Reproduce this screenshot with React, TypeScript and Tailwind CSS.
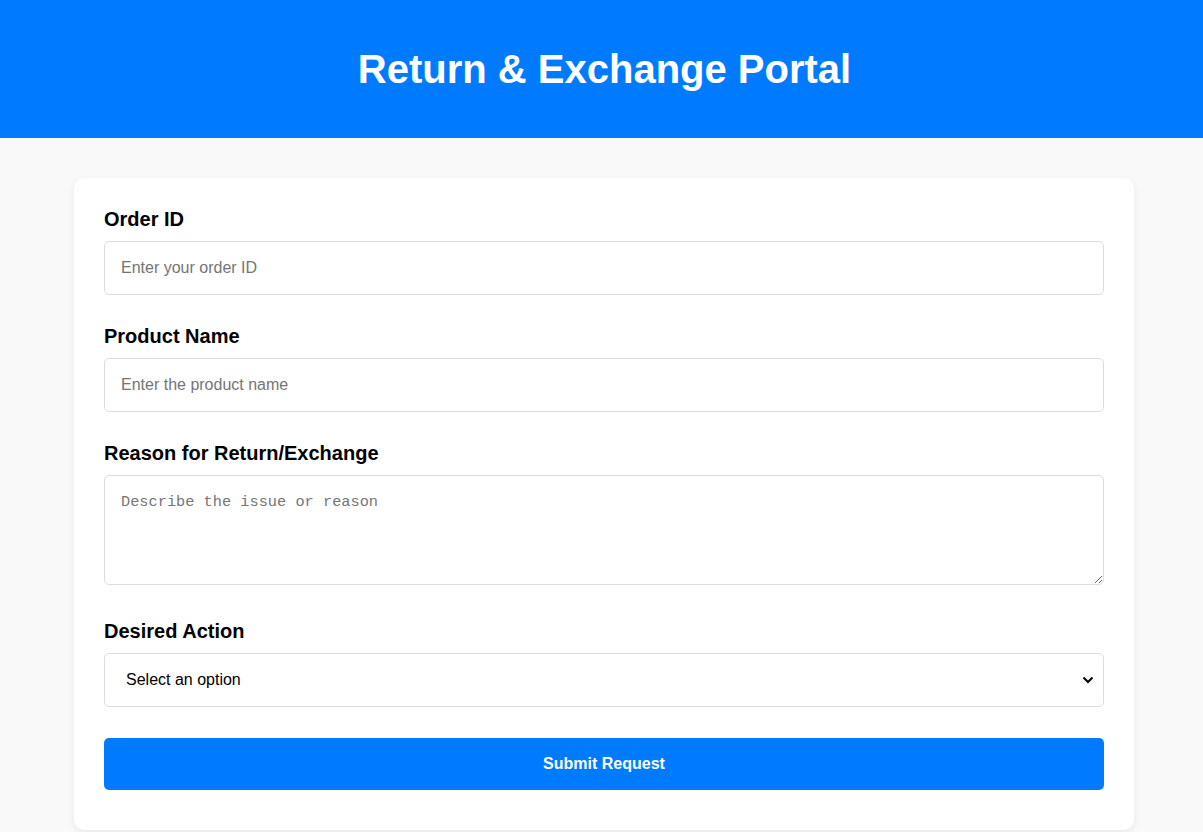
import React from "react";

export default function App() {
  const font = { fontFamily: '"Liberation Sans", Arial, sans-serif' };
  return (
    <div className="min-h-[832px] bg-[#f9f9f9] font-['Liberation_Sans',Arial,sans-serif]" style={font}>
      <header className="h-[138px] bg-[#007bff] flex items-center justify-center pl-[6px]">
        <h1 className="text-white text-[40px] font-bold leading-[46px]">Return &amp; Exchange Portal</h1>
      </header>
      <div className="ml-[74px] mt-[40px] w-[1060px] bg-white rounded-[10px] shadow-[0_2px_6px_rgba(0,0,0,0.08)] px-[30px] pt-[30px] pb-[40px]">
        <form onSubmit={(e) => e.preventDefault()}>
          <label className="block text-[20px] font-bold leading-[22px] mb-[11px] text-black">Order ID</label>
          <input
            type="text"
            placeholder="Enter your order ID"
            className="block w-full h-[54px] border border-[#dddddd] rounded-[5px] px-[16px] text-[16px] placeholder:text-[#757575] outline-none mb-[30px]"
          />
          <label className="block text-[20px] font-bold leading-[22px] mb-[11px] text-black">Product Name</label>
          <input
            type="text"
            placeholder="Enter the product name"
            className="block w-full h-[54px] border border-[#dddddd] rounded-[5px] px-[16px] text-[16px] placeholder:text-[#757575] outline-none mb-[30px]"
          />
          <label className="block text-[20px] font-bold leading-[22px] mb-[11px] text-black">Reason for Return/Exchange</label>
          <textarea
            placeholder="Describe the issue or reason"
            className="block w-full h-[110px] border border-[#dddddd] rounded-[5px] px-[16px] pt-[17px] text-[15.3px] leading-[18px] font-['Liberation_Mono',monospace] placeholder:text-[#757575] outline-none mb-[35px]"
          />
          <label className="block text-[20px] font-bold leading-[22px] mb-[11px] text-black">Desired Action</label>
          <div className="relative mb-[31px]">
            <select
              defaultValue=""
              className="block w-full h-[54px] appearance-none border border-[#dddddd] rounded-[5px] pl-[21px] pr-[40px] text-[16px] text-black bg-white outline-none"
            >
              <option value="">Select an option</option>
              <option value="return">Return</option>
              <option value="exchange">Exchange</option>
            </select>
            <svg
              className="absolute right-[10px] top-1/2 -translate-y-1/2 pointer-events-none"
              width="12"
              height="8"
              viewBox="0 0 12 8"
              fill="none"
            >
              <path d="M1.5 1.5 L6 6 L10.5 1.5" stroke="#000" strokeWidth="2" />
            </svg>
          </div>
          <button
            type="submit"
            className="block w-full h-[52px] bg-[#007bff] text-white text-[16px] font-bold rounded-[5px]"
          >
            Submit Request
          </button>
        </form>
      </div>
    </div>
  );
}
